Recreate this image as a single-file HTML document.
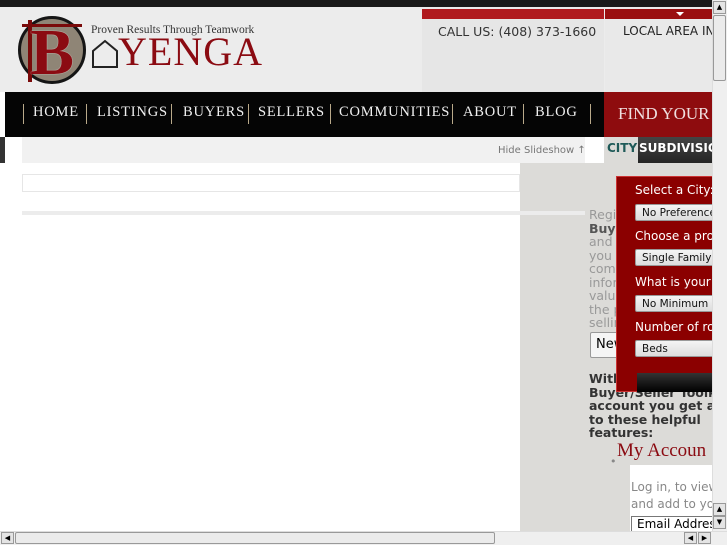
<!DOCTYPE html>
<html><head><meta charset="utf-8"><style>
*{margin:0;padding:0;box-sizing:border-box}
body{width:727px;height:545px;overflow:hidden;position:relative;background:#fff;font-family:"DejaVu Sans","Liberation Sans",sans-serif}
.a{position:absolute}
.serif{font-family:"Liberation Serif","DejaVu Serif",serif}
.nav span{position:absolute;top:12px;font-family:"Liberation Serif",serif;font-size:14.5px;color:#f0f0f0;letter-spacing:0.8px}
.nav i{position:absolute;top:12px;width:1px;height:20px;background:#b9a98a}
.gt{color:#999;font-size:12.5px;line-height:13.5px}
.lab{color:#fff;font-size:12px}
.sel{position:absolute;left:635px;width:80px;height:17px;background:linear-gradient(#f4f4f4,#ddd);border:1px solid #999;border-radius:2px;font-size:10.5px;padding:2px 6px;color:#111;white-space:nowrap;overflow:hidden}
</style></head><body>
<div class="a" style="left:0;top:0;width:712px;height:7px;background:#1a1a1a"></div>
<div class="a" style="left:0;top:7px;width:712px;height:85px;background:#ececec"></div>
<!-- logo -->
<div class="a" style="left:18px;top:16px;width:68px;height:68px;border-radius:50%;background:#8f8576;border:3px solid #151515"></div>
<div class="a" style="left:28px;top:20px;width:4px;height:62px;background:#7a0a0a"></div>
<div class="a" style="left:22px;top:24px;width:60px;height:3px;background:#7a0a0a"></div>
<div class="a serif" style="left:30px;top:18px;font-size:66px;line-height:70px;color:#8b0b12;font-weight:bold;text-shadow:0 0 1px #fff">B</div>
<div class="a serif" style="left:91px;top:24px;font-size:11.5px;color:#333">Proven Results Through Teamwork</div>
<svg class="a" style="left:90px;top:38px" width="30" height="30"><path d="M3 29V13L15 3L27 13V29Z" fill="none" stroke="#222" stroke-width="2"/></svg>
<div class="a serif" style="left:118px;top:30px;font-size:40px;line-height:44px;color:#8b0b12;letter-spacing:1px">YENGA</div>
<!-- top right -->
<div class="a" style="left:422px;top:9px;width:182px;height:10px;background:#b01a1e"></div>
<div class="a" style="left:605px;top:9px;width:107px;height:10px;background:#9a0f10"></div>
<div class="a" style="left:676px;top:12px;border-left:4px solid transparent;border-right:4px solid transparent;border-top:4px solid #fff"></div>
<div class="a" style="left:422px;top:19px;width:182px;height:73px;background:#e6e6e6"></div>
<div class="a" style="left:605px;top:19px;width:107px;height:73px;background:#e9e9e9"></div>
<div class="a" style="left:438px;top:24px;font-size:12.5px;color:#333">CALL US: (408) 373-1660</div>
<div class="a" style="left:623px;top:24px;font-size:12px;color:#222;white-space:nowrap">LOCAL AREA IN</div>
<!-- nav -->
<div class="a nav" style="left:5px;top:92px;width:599px;height:45px;background:#050505">
<i style="left:18px"></i><span style="left:28px">HOME</span><i style="left:81px"></i><span style="left:92px">LISTINGS</span><i style="left:166px"></i><span style="left:178px">BUYERS</span><i style="left:243px"></i><span style="left:253px">SELLERS</span><i style="left:325px"></i><span style="left:334px">COMMUNITIES</span><i style="left:447px"></i><span style="left:458px">ABOUT</span><i style="left:518px"></i><span style="left:530px">BLOG</span><i style="left:585px"></i>
</div>
<div class="a serif" style="left:604px;top:92px;width:108px;height:45px;background:#8e0c0e;color:#f0e0e0;font-size:17px;padding:12px 0 0 14px;white-space:nowrap;overflow:hidden">FIND YOUR I</div>
<div class="a" style="left:0;top:137px;width:5px;height:26px;background:#333"></div>
<div class="a" style="left:22px;top:137px;width:563px;height:26px;background:#f1f1f1"></div>
<div class="a" style="left:498px;top:145px;font-size:10px;color:#777">Hide Slideshow ↑</div>
<div class="a" style="left:604px;top:137px;width:34px;height:26px;background:#dcdbd8"></div>
<div class="a" style="left:607px;top:141px;font-size:12px;font-weight:bold;color:#1f5a58">CITY</div>
<div class="a" style="left:638px;top:137px;width:74px;height:28px;background:linear-gradient(#444,#222);color:#fff;font-weight:bold;font-size:12px;padding:4px 0 0 1px;white-space:nowrap;overflow:hidden">SUBDIVISIO</div>
<div class="a" style="left:22px;top:174px;width:498px;height:18px;border:1px solid #e6e6e6"></div>
<div class="a" style="left:22px;top:211px;width:563px;height:4px;background:#ececec"></div>
<!-- gray panel -->
<div class="a" style="left:520px;top:163px;width:192px;height:368px;background:#dcdbd8"></div>
<div class="a" style="left:520px;top:211px;width:65px;height:4px;background:#ececec"></div>
<div class="a gt" style="left:589px;top:208px;width:60px;overflow:hidden">Regis<br><b style="color:#555">Buye</b><br>and f<br>you w<br>comp<br>infor<br>valua<br>the p<br>sellin</div>
<div class="a" style="left:590px;top:332px;width:40px;height:26px;border:1px solid #999;background:#f5f5f5;border-radius:2px;font-size:13px;padding:4px 5px;overflow:hidden">New</div>
<div class="a" style="left:589px;top:372px;font-size:12.5px;font-weight:bold;color:#333;line-height:13.5px;width:123px;overflow:hidden;white-space:nowrap">With<br>Buyer/Seller Toolkit<br>account you get a<br>to these helpful<br>features:</div>
<div class="a serif" style="left:617px;top:440px;font-size:19px;color:#8b0b12;white-space:nowrap">My Accoun</div>
<div class="a" style="left:610px;top:455px;font-size:11px;color:#888">•</div>
<div class="a" style="left:630px;top:465px;width:82px;height:66px;background:#fff"></div>
<div class="a" style="left:631px;top:479px;font-size:12px;color:#888;line-height:17px;white-space:nowrap">Log in, to view<br>and add to yo</div>
<div class="a" style="left:631px;top:516px;width:90px;height:16px;border:1px solid #777;font-size:12px;padding:0 5px;white-space:nowrap;overflow:hidden">Email Address</div>
<!-- red form -->
<div class="a" style="left:616px;top:176px;width:100px;height:216px;background:#8b0000;border:1px solid #c33"></div>
<div class="a lab" style="left:635px;top:183px">Select a City:</div>
<div class="sel" style="top:204px">No Preference</div>
<div class="a lab" style="left:635px;top:229px;white-space:nowrap">Choose a pro</div>
<div class="sel" style="top:249px">Single Family</div>
<div class="a lab" style="left:635px;top:275px;white-space:nowrap">What is your p</div>
<div class="sel" style="top:295px">No Minimum</div>
<div class="a lab" style="left:635px;top:320px;white-space:nowrap">Number of roo</div>
<div class="sel" style="top:340px">Beds</div>
<div class="a" style="left:637px;top:373px;width:76px;height:19px;background:linear-gradient(#333,#000)"></div>
<!-- scrollbars -->
<div class="a" style="left:712px;top:0;width:15px;height:531px;background:#efefef;border-left:1px solid #ddd"></div>
<div class="a" style="left:713px;top:1px;width:13px;height:13px;background:#e4e4e4;border:1px solid #999;font-size:7px;text-align:center;line-height:11px">▲</div>
<div class="a" style="left:713px;top:15px;width:13px;height:66px;background:#ebebeb;border:1px solid #999;border-radius:2px"></div>
<div class="a" style="left:713px;top:503px;width:13px;height:13px;background:#e4e4e4;border:1px solid #999;font-size:7px;text-align:center;line-height:11px">▲</div>
<div class="a" style="left:713px;top:516px;width:13px;height:13px;background:#e4e4e4;border:1px solid #999;font-size:7px;text-align:center;line-height:11px">▼</div>
<div class="a" style="left:0;top:531px;width:727px;height:14px;background:#efefef;border-top:1px solid #ddd"></div>
<div class="a" style="left:1px;top:532px;width:13px;height:12px;background:#e4e4e4;border:1px solid #999;font-size:7px;text-align:center;line-height:10px">◀</div>
<div class="a" style="left:15px;top:532px;width:480px;height:12px;background:#ebebeb;border:1px solid #999;border-radius:2px"></div>
<div class="a" style="left:684px;top:532px;width:13px;height:12px;background:#e4e4e4;border:1px solid #999;font-size:7px;text-align:center;line-height:10px">◀</div>
<div class="a" style="left:698px;top:532px;width:13px;height:12px;background:#e4e4e4;border:1px solid #999;font-size:7px;text-align:center;line-height:10px">▶</div>
</body></html>
